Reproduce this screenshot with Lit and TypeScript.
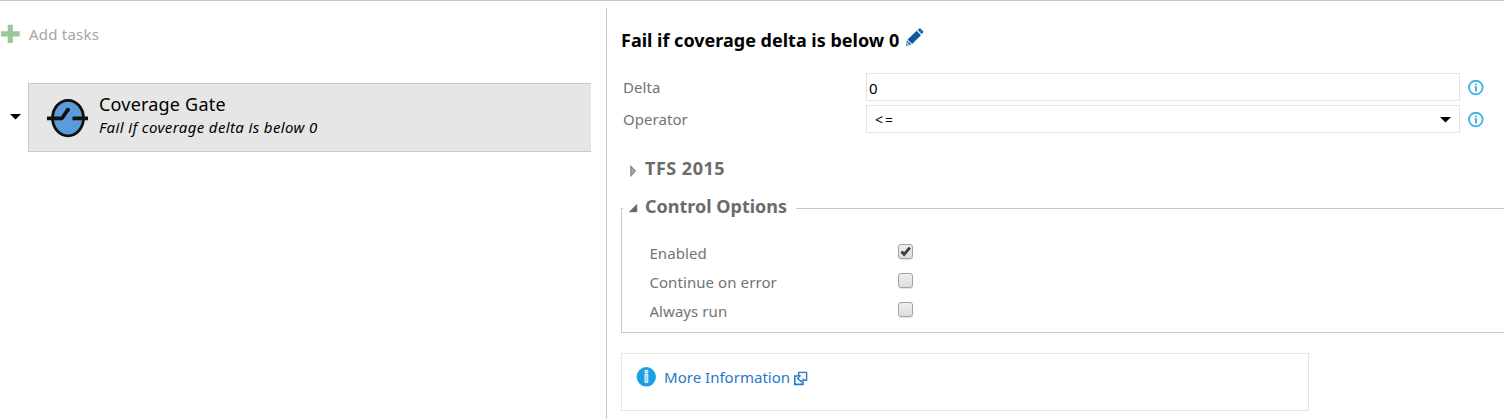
import { LitElement, html, css } from 'lit';
import { customElement, property } from 'lit/decorators.js';

@customElement('info-ring')
export class InfoRing extends LitElement {
  static styles = css`
    :host { display: block; width: 16px; height: 16px; }
    svg { display: block; }
  `;
  render() {
    return html`<svg width="16" height="16" viewBox="0 0 16 16">
      <circle cx="7.8" cy="7.5" r="6.8" fill="#fff" stroke="#45b3e7" stroke-width="1.9" />
      <path d="M7 3.8h1.9v1.5H7z M6.3 6.4h2.6v5H7V7.5h-.7z" fill="#3fa9dc" />
    </svg>`;
  }
}

@customElement('option-check')
export class OptionCheck extends LitElement {
  @property({ type: Boolean }) checked = false;
  static styles = css`
    :host { display: block; width: 15px; height: 15px; }
    .box {
      box-sizing: border-box; width: 15px; height: 15px; border: 1px solid #a3a3a3; border-radius: 3px;
      background: linear-gradient(#eee, #dcdcdc); box-shadow: 0 1px 1px rgba(0, 0, 0, 0.12);
    }
    svg { display: block; }
  `;
  render() {
    return html`<div class="box">
      ${this.checked
        ? html`<svg width="13" height="13" viewBox="0 0 13 13">
            <path d="M2.5 6.5L5.1 9.4L10.9 2.6" fill="none" stroke="#3c3c3c" stroke-width="2.8" />
          </svg>`
        : ''}
    </div>`;
  }
}

@customElement('app-root')
export class AppRoot extends LitElement {
  static styles = css`
    :host { display: block; font: 15px/20px "Noto Sans", "Open Sans", sans-serif; color: #000; }
    * { box-sizing: border-box; }
    svg { display: block; flex: none; }
    .page { display: flex; width: 1504px; height: 419px; background: #fff; border-top: 1px solid #c8c8c8; overflow: hidden; }
    .t { white-space: nowrap; }

    .left { width: 606px; flex: none; }
    .add { display: flex; margin-top: 23px; height: 20px; color: #a6a6a6; gap: 9px; letter-spacing: 0.22px; }
    .row { display: flex; margin-top: 39px; }
    .row .arrow { margin: 31px 7px 0 10px; }
    .card { display: flex; width: 563px; height: 69px; background: #e6e6e6; border: 1px solid #c8c8c8; border-right: 0; padding: 8px 0 0 17px; gap: 10px; }
    .gate { margin-top: 6px; }
    .name { font-size: 18px; line-height: 24px; letter-spacing: 0.2px; padding: 0 0 1px 1px; }
    .sub { font-style: italic; letter-spacing: 0.37px; padding-left: 1px; }

    .right { width: 898px; flex: none; margin-top: 7px; border-left: 1px solid #c8c8c8; padding-left: 14px; }
    .title { display: flex; margin: 20px 0 21px 0; height: 24px; font-size: 18px; line-height: 24px; font-weight: 700; letter-spacing: 0; gap: 5px; }
    .title .t { letter-spacing: 0; width: 279px; }
    .field { display: flex; height: 28px; margin-bottom: 4px; color: #737373; }
    .field .t { width: 245px; padding: 4px 0 0 2px; letter-spacing: 0.05px; }
    .box { display: flex; width: 594px; height: 28px; border: 1px solid #e4e4e4; color: #000; margin-right: 8px; justify-content: space-between; }
    .value { padding: 4px 0 0 2px; }
    .op { padding: 4px 0 0 8px; font-size: 14px; letter-spacing: 2px; }
    .box svg { margin: 11px 8px 0 0; }
    info-ring { margin-top: 7px; }

    .head { display: flex; font-size: 18px; line-height: 24px; font-weight: 700; color: #6b6b6b; }
    .tfs { margin: 23px 0 14px 9px; gap: 8px; letter-spacing: 0.5px; }
    .tfs svg { margin-top: 9px; }
    fieldset { margin: 0; border: 1px solid #c8c8c8; border-right: 0; padding: 21px 0 0 27px; height: 139px; min-width: 0; }
    legend { height: 28px; margin-left: -26px; padding: 0 9px 0 5px; letter-spacing: 0; gap: 7px; width: 173px; }
    legend svg { margin-top: 9px; }
    .option { display: flex; height: 29px; color: #737373; }
    .option .t { width: 249px; letter-spacing: 0.08px; padding-left: 0.4px; }
    option-check { margin-top: 1px; }

    .more { display: flex; width: 688px; height: 58px; margin-top: 20px; border: 1px solid #e4e4e4; padding: 13px 0 0 14px; color: #1f78c8; }
    .more .t { margin-left: 7px; width: 129px; letter-spacing: 0.02px; }
    .more .ext { margin-top: 4px; }
  `;

  private options = [
    { label: 'Enabled', on: true },
    { label: 'Continue on error', on: false },
    { label: 'Always run', on: false },
  ];

  private down(cls = '') {
    return html`<svg class=${cls} width="11" height="6" viewBox="0 0 11 6"><path d="M0 0H11L5.5 5.6z" fill="#000" /></svg>`;
  }

  render() {
    return html`<div class="page">
      <section class="left">
        <div class="add">
          <svg width="20" height="20" viewBox="0 0 20 20">
            <path d="M7.7.7h5.2v6.5h6.8v5.2h-6.8v6.5H7.7v-6.5H1V7.2h6.7z" fill="#9bc89b" />
          </svg>
          <span class="t">Add tasks</span>
        </div>
        <div class="row">
          ${this.down('arrow')}
          <div class="card">
            <svg class="gate" width="42" height="40" viewBox="0 0 42 40">
              <ellipse cx="22" cy="20.1" rx="15.5" ry="17.8" fill="#5b9bd9" stroke="#111" stroke-width="2.8" />
              <path d="M1 20.3H16L22 11.5M26.5 20.3H42" fill="none" stroke="#111" stroke-width="3.8" stroke-linejoin="round" />
              <circle cx="22" cy="11.7" r="2" fill="#111" />
            </svg>
            <div>
              <div class="name t">Coverage Gate</div>
              <div class="sub t">Fail if coverage delta is below 0</div>
            </div>
          </div>
        </div>
      </section>
      <section class="right">
        <div class="title">
          <span class="t">Fail if coverage delta is below 0</span>
          <svg width="20" height="20" viewBox="0 0 20 20">
            <path d="M2.6 11.4L11.7 2.7L16 7.2L7.1 15.9z" fill="#0a5aa3" />
            <path d="M12.6 1.9L14.1.6Q15 0 15.8.8L18.1 3.1Q18.9 4 18.1 4.8L16.8 6.2z" fill="#2a70b0" />
            <path d="M2.1 12.2L6.4 16.4L1 18z" fill="#2a70b0" />
            <path d="M2.2 14.2L4.4 16.4L2 17z" fill="#fff" opacity=".7" />
          </svg>
        </div>
        <div class="field">
          <span class="t">Delta</span>
          <div class="box"><span class="value">0</span></div>
          <info-ring></info-ring>
        </div>
        <div class="field">
          <span class="t">Operator</span>
          <div class="box"><span class="op">&lt;=</span>${this.down()}</div>
          <info-ring></info-ring>
        </div>
        <div class="head tfs">
          <svg width="7" height="12" viewBox="0 0 7 12">
            <path d="M.9 1.4L5.2 6L.9 10.6z" fill="#b0b0b0" stroke="#858585" stroke-width="1.3" />
          </svg>
          <span class="t">TFS 2015</span>
        </div>
        <fieldset>
          <legend class="head">
            <svg width="10" height="10" viewBox="0 0 10 10"><path d="M9 1.2V9H1z" fill="#666" stroke="#888" stroke-width=".5" /></svg>
            <span class="t">Control Options</span>
          </legend>
          ${this.options.map(
            (o) => html`<div class="option"><span class="t">${o.label}</span><option-check ?checked=${o.on}></option-check></div>`
          )}
        </fieldset>
        <div class="more">
          <svg width="21" height="21" viewBox="0 0 21 21">
            <circle cx="10.3" cy="9.8" r="9.7" fill="#1ba1e2" />
            <path d="M9 3.4h2.8v2.3H9z M9 7h2.8v8.4H9z" fill="#8fd0f1" stroke="#fff" stroke-width=".9" />
          </svg>
          <span class="t">More Information</span>
          <svg class="ext" width="15" height="15" viewBox="0 0 15 15">
            <path d="M5.2 5H1.8V13.4H10V10.6" fill="none" stroke="#2a78bf" stroke-width="1.6" />
            <path d="M5.6 1.4H13.6V9.4H11.2L10.8 8.2L8.2 10.8L4.6 7.4L7.2 4.8L5.6 4.2z" fill="#f2f8fd" stroke="#2a78bf" stroke-width="1.4" stroke-linejoin="round" />
          </svg>
        </div>
      </section>
    </div>`;
  }
}
